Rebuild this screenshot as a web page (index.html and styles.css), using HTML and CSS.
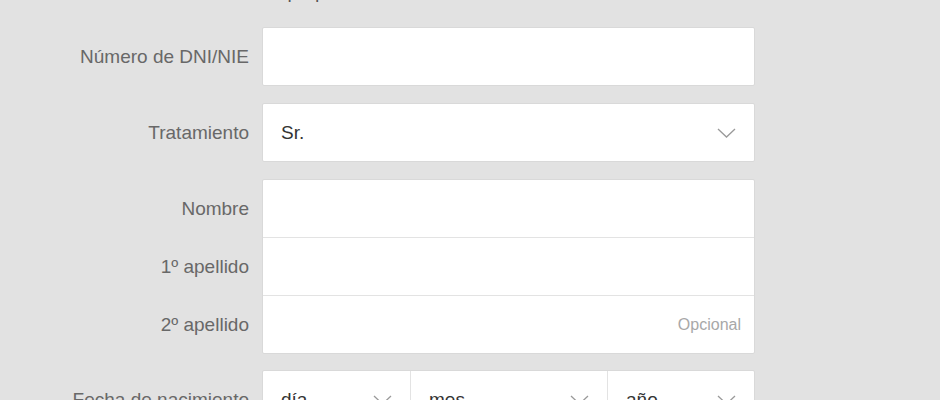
FILE: index.html
```html
<!DOCTYPE html>
<html lang="es">
<head>
<meta charset="utf-8">
<link rel="stylesheet" href="styles.css">
</head>
<body>
<div class="page">
  <p class="intro">Un paquete de datos</p>
  <form class="form">
    <div class="row">
      <label class="label">Número de DNI/NIE</label>
      <div class="box"><div class="field"></div></div>
    </div>
    <div class="row">
      <label class="label">Tratamiento</label>
      <div class="box">
        <div class="field select">
          <span class="value">Sr.</span>
          <svg class="chev" width="19" height="10" viewBox="0 0 19 10"><polyline points="1,1 9.5,9 18,1" fill="none" stroke="#9a9a9a" stroke-width="1.3"/></svg>
        </div>
      </div>
    </div>
    <div class="row">
      <div class="labels">
        <label class="label">Nombre</label>
        <label class="label">1º apellido</label>
        <label class="label">2º apellido</label>
      </div>
      <div class="box stack">
        <div class="field"></div>
        <div class="field"></div>
        <div class="field"><span class="hint">Opcional</span></div>
      </div>
    </div>
    <div class="row row-date">
      <label class="label">Fecha de nacimiento</label>
      <div class="box date">
        <div class="field select d1"><span class="value">día</span>
          <svg class="chev" width="19" height="10" viewBox="0 0 19 10"><polyline points="1,1 9.5,9 18,1" fill="none" stroke="#9a9a9a" stroke-width="1.3"/></svg></div>
        <div class="field select d2"><span class="value">mes</span>
          <svg class="chev" width="19" height="10" viewBox="0 0 19 10"><polyline points="1,1 9.5,9 18,1" fill="none" stroke="#9a9a9a" stroke-width="1.3"/></svg></div>
        <div class="field select d3"><span class="value">año</span>
          <svg class="chev" width="19" height="10" viewBox="0 0 19 10"><polyline points="1,1 9.5,9 18,1" fill="none" stroke="#9a9a9a" stroke-width="1.3"/></svg></div>
      </div>
    </div>
  </form>
</div>
</body>
</html>
```
FILE: styles.css
```css
html, body {
  margin: 0;
  padding: 0;
  background: #e2e2e2;
  font-family: "Liberation Sans", Arial, sans-serif;
  overflow: hidden;
}
.page {
  height: 400px;
  overflow: hidden;
}
.intro {
  margin: -18px 0 0 258px;
  height: 20px;
  line-height: 20px;
  font-size: 19px;
  color: #555;
}
.form {
  display: flex;
  flex-direction: column;
  gap: 17px;
  margin-top: 25px;
}
.row {
  display: grid;
  grid-template-columns: 249px 493px;
  column-gap: 13px;
  align-items: center;
}
.row-date {
  margin-top: -1px;
}
.label {
  display: block;
  text-align: right;
  font-size: 19px;
  color: #686868;
}
.labels {
  display: flex;
  flex-direction: column;
}
.labels .label {
  height: 58px;
  line-height: 58px;
}
.box {
  background: #fff;
  border: 1px solid #d9d9d9;
  border-radius: 2px;
  box-sizing: border-box;
}
.field {
  height: 57px;
  display: flex;
  align-items: center;
  padding: 0 18px;
  box-sizing: border-box;
}
.stack .field + .field {
  border-top: 1px solid #e3e3e3;
  height: 58px;
}
.select {
  justify-content: space-between;
}
.value {
  font-size: 19px;
  color: #333;
}
.hint {
  margin-left: auto;
  font-size: 16px;
  color: #a8a8a8;
  margin-right: -5px;
}
.date {
  display: flex;
}
.d1 { width: 147px; }
.d2 { width: 197px; border-left: 1px solid #e3e3e3; }
.d3 { flex: 1; border-left: 1px solid #e3e3e3; }
```
